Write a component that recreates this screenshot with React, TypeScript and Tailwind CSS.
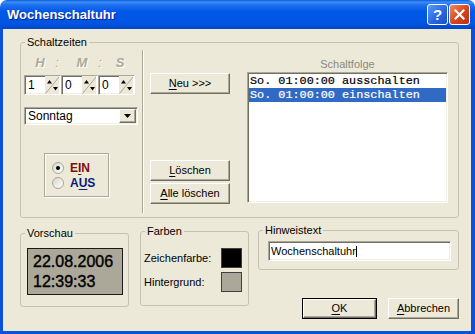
import React from 'react';

const sunken =
  'border border-t-[#aca899] border-l-[#aca899] border-b-white border-r-white shadow-[inset_1px_1px_#716f64,inset_-1px_-1px_#f1efe2]';
const raised =
  'border border-t-white border-l-white border-b-[#716f64] border-r-[#716f64] shadow-[inset_-1px_-1px_#aca899]';

const GroupBox: React.FC<{ label?: string; className?: string; children?: React.ReactNode }> = ({
  label,
  className,
  children,
}) => (
  <fieldset className={`rounded-[3px] border border-[#c5c2b2] ${className ?? ''}`}>
    <legend className="ml-[4px] px-[2px] leading-[14px] text-black">{label}</legend>
    {children}
  </fieldset>
);

const Btn: React.FC<{ className?: string; children: React.ReactNode }> = ({ className, children }) => (
  <button
    type="button"
    className={`flex items-center justify-center bg-[#ece9d8] leading-none text-black ${raised} ${className ?? ''}`}
  >
    {children}
  </button>
);

const U: React.FC<{ children: React.ReactNode }> = ({ children }) => (
  <span className="underline decoration-1 underline-offset-[2px]">{children}</span>
);

const SpinEdit: React.FC<{ value: string }> = ({ value }) => (
  <div className={`flex h-[20px] w-[37px] bg-white ${sunken}`}>
    <span className="flex-1 pl-[3px] pt-[2px] text-[12px] leading-[14px]">{value}</span>
    {/* diagonal split up/down arrows */}
    <svg width="15" height="18" viewBox="0 0 15 18" className="shrink-0">
      <rect x="0" y="0" width="15" height="18" fill="#ece9d8" />
      <line x1="0.5" y1="17.5" x2="14.5" y2="0.5" stroke="#aca899" />
      <line x1="14.5" y1="0" x2="14.5" y2="18" stroke="#fff" />
      <path d="M2 7.5 L4.5 4 L7 7.5 Z" fill="#000" />
      <path d="M8 11 L10.5 14.5 L13 11 Z" fill="#000" />
    </svg>
  </div>
);

const Radio: React.FC<{ checked?: boolean; children: React.ReactNode; color: string }> = ({
  checked,
  children,
  color,
}) => (
  <div className="flex h-[15px] items-center gap-[6px]">
    <span className="flex h-[12px] w-[12px] items-center justify-center rounded-full border border-[#a9a797] bg-[linear-gradient(135deg,#d8d6cc,#ffffff)]">
      {checked && <span className="h-[4px] w-[4px] rounded-full bg-black" />}
    </span>
    <span className={`text-[12px] font-bold leading-none ${color}`}>{children}</span>
  </div>
);

export default function App() {
  return (
    <div className="h-[334px] w-[475px] bg-white font-['Liberation_Sans',Arial,sans-serif] text-[11px] text-black">
      <div className="flex h-full flex-col overflow-hidden rounded-t-[7px]">
        {/* Title bar */}
        <div className="flex h-[29px] items-center bg-[linear-gradient(180deg,#0a5ad4_0%,#3d8ff8_7%,#2473f2_15%,#0058e6_40%,#0055e3_80%,#0047c6_100%)] pl-[7px] pr-[5px]">
          <span className="flex-1 text-[13px] font-bold leading-none text-white [text-shadow:1px_1px_#0b1f8f]">
            Wochenschaltuhr
          </span>
          <div className="flex gap-[1px]">
            <div className="flex h-[21px] w-[21px] items-center justify-center rounded-[3px] border border-white bg-[linear-gradient(135deg,#5a9bff,#2463e0_60%,#1b4fc7)] text-[15px] font-bold leading-none text-white">
              ?
            </div>
            <div className="flex h-[21px] w-[21px] items-center justify-center rounded-[3px] border border-white bg-[linear-gradient(135deg,#f08a64,#d6441a_55%,#b83210)]">
              <svg width="11" height="11" viewBox="0 0 11 11">
                <path d="M1.5 1.5 L9.5 9.5 M9.5 1.5 L1.5 9.5" stroke="#fff" strokeWidth="2.2" strokeLinecap="square" />
              </svg>
            </div>
          </div>
        </div>

        {/* Client area */}
        <div className="flex flex-1 flex-col border-b-[3px] border-l-[3px] border-r-[4px] border-[#0a52dc] bg-[#ece9d8] pl-[17px] pr-[12px] pt-[6px]">
          {/* Schaltzeiten */}
          <GroupBox label="Schaltzeiten" className="h-[183px]">
            <div className="flex">
              {/* left column */}
              <div className="flex w-[121px] flex-col">
                <div className="ml-[9px] mt-[6px] flex h-[14px] items-center text-[13px] font-bold italic leading-none text-[#aca899] [text-shadow:1px_1px_#ffffff]">
                  <span className="w-[20px] text-center">H</span>
                  <span className="ml-[2px] w-[10px] text-center font-normal">:</span>
                  <span className="ml-[10px] w-[20px] text-center">M</span>
                  <span className="ml-[3px] w-[10px] text-center font-normal">:</span>
                  <span className="ml-[5px] w-[20px] text-center">S</span>
                </div>
                <div className="ml-[3px] mt-[6px] flex">
                  <SpinEdit value="1" />
                  <SpinEdit value="0" />
                  <SpinEdit value="0" />
                </div>
                <div className={`ml-[3px] mt-[12px] flex h-[18px] w-[114px] items-center bg-white ${sunken}`}>
                  <span className="flex-1 pl-[3px] text-[12px] leading-none">Sonntag</span>
                  <div className={`mr-[1px] flex h-[14px] w-[17px] items-center justify-center bg-[#ece9d8] ${raised}`}>
                    <svg width="7" height="4" viewBox="0 0 7 4">
                      <path d="M0 0 H7 L3.5 4 Z" fill="#000" />
                    </svg>
                  </div>
                </div>
                <div className="ml-[23px] mt-[28px] flex h-[44px] w-[65px] flex-col justify-center border border-[#aca899] pl-[7px] shadow-[inset_1px_1px_#fff,1px_1px_#fff]">
                  <Radio checked color="text-[#7b1010]">
                    E<U>I</U>N
                  </Radio>
                  <Radio color="text-[#0a1a7a]">
                    A<U>U</U>S
                  </Radio>
                </div>
              </div>

              {/* separator */}
              <div className="mt-[1px] h-[163px] w-[2px] border-l border-r border-l-[#aca899] border-r-white" />

              {/* buttons */}
              <div className="ml-[6px] flex w-[80px] flex-col">
                <Btn className="mt-[24px] h-[21px]">
                  <span>
                    <U>N</U>eu &gt;&gt;&gt;
                  </span>
                </Btn>
                <Btn className="mt-[66px] h-[21px]">
                  <span>
                    <U>L</U>öschen
                  </span>
                </Btn>
                <Btn className="mt-[2px] h-[21px]">
                  <span>
                    <U>A</U>lle löschen
                  </span>
                </Btn>
              </div>

              {/* list */}
              <div className="ml-[17px] flex w-[201px] flex-col">
                <div className="mt-[8px] h-[14px] text-center leading-[14px] text-[#8c8a80]">Schaltfolge</div>
                <div className={`mt-[1px] h-[131px] bg-white p-[1px] ${sunken}`}>
                  <div className="font-['Liberation_Mono','Courier_New',monospace] text-[11.8px] leading-[14px] [-webkit-text-stroke:0.2px]">
                    <div className="h-[14px] whitespace-pre pl-[1px]">So. 01:00:00 ausschalten</div>
                    <div className="h-[14px] whitespace-pre bg-[#316ac5] pl-[1px] text-white">So. 01:00:00 einschalten</div>
                  </div>
                </div>
              </div>
            </div>
          </GroupBox>

          {/* bottom row */}
          <div className="flex items-start">
            <GroupBox label="Vorschau" className="mt-[8px] h-[81px] w-[109px]">
              <div className="ml-[6px] mt-[8px] flex h-[47px] w-[96px] flex-col justify-center border border-[#1a1a1a] bg-[#aca899] pl-[5px] text-[16px] leading-[20px] [-webkit-text-stroke:0.4px]">
                <span>22.08.2006</span>
                <span>12:39:33</span>
              </div>
            </GroupBox>

            <GroupBox label="Farben" className="ml-[11px] mt-[6px] h-[82px] w-[109px]">
              <div className="mt-[10px] flex h-[20px] items-center pl-[3px] pr-[6px]">
                <span className="flex-1">Zeichenfarbe:</span>
                <span className="h-[20px] w-[21px] border border-[#404040] bg-black" />
              </div>
              <div className="mt-[4px] flex h-[20px] items-center pl-[3px] pr-[6px]">
                <span className="flex-1">Hintergrund:</span>
                <span className="h-[20px] w-[21px] border border-[#404040] bg-[#aca899]" />
              </div>
            </GroupBox>

            <div className="ml-[9px] flex w-[201px] flex-col">
              <GroupBox label="Hinweistext" className="mt-[5px] h-[47px]">
                <div className={`ml-[9px] mt-[4px] flex h-[20px] w-[183px] items-center bg-white pl-[2px] ${sunken}`}>
                  <span className="leading-none">Wochenschaltuhr</span>
                  <span className="h-[11px] w-[1px] bg-black" />
                </div>
              </GroupBox>
              <div className="mt-[28px] flex justify-end gap-[11px]">
                <div className="h-[21px] w-[75px] border border-black">
                  <Btn className="h-full w-full">
                    <U>O</U>K
                  </Btn>
                </div>
                <Btn className="h-[21px] w-[71px]">
                  <span>
                    <U>A</U>bbrechen
                  </span>
                </Btn>
              </div>
            </div>
          </div>
        </div>
      </div>
    </div>
  );
}
